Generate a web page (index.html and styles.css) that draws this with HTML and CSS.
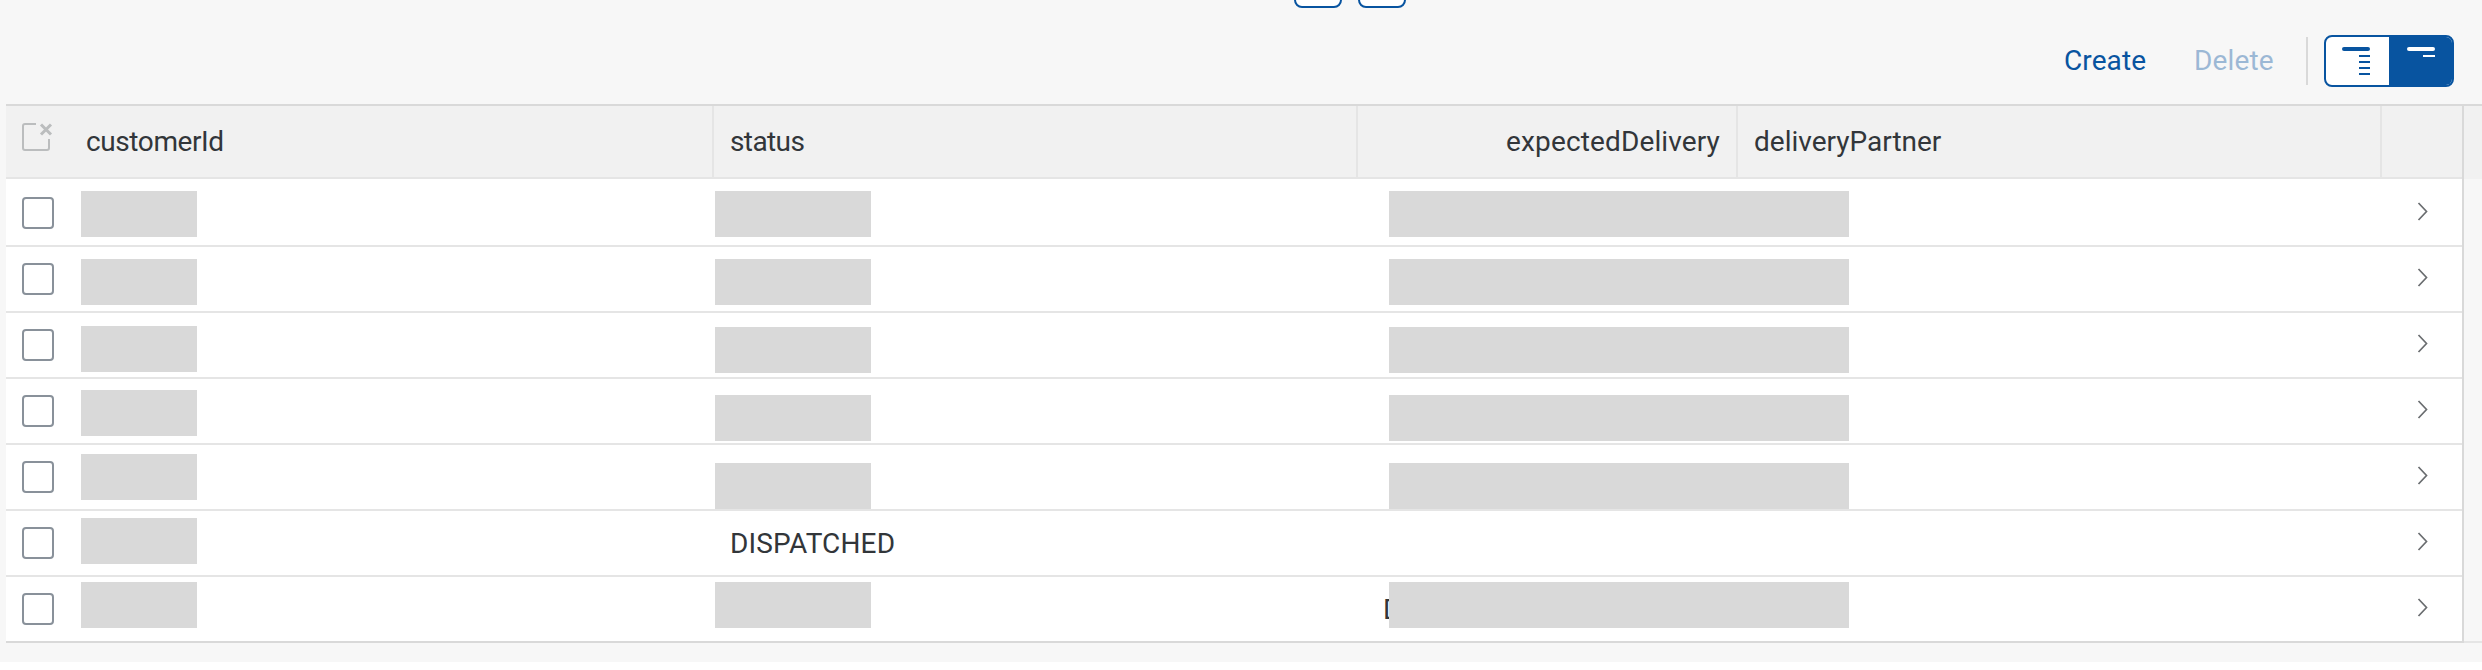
FILE: index.html
```html
<!DOCTYPE html>
<html lang="en">
<head>
<meta charset="utf-8">
<title>Orders</title>
<link rel="stylesheet" href="styles.css">
</head>
<body>
<main class="page">
  <div class="pager"><button class="pager-btn" aria-label="Previous"></button><button class="pager-btn" aria-label="Next"></button></div>
  <div class="toolbar">
    <span class="action create">Create</span>
    <span class="action delete">Delete</span>
    <span class="separator"></span>
    <div class="segmented">
      <span class="segment"><svg width="64" height="48" viewBox="0 0 64 48"><path d="M18 12H42" stroke-width="4" stroke-linecap="round"/><path d="M33 19H44M33 25H44M33 31H44M33 37H44" stroke-width="2"/></svg></span>
      <span class="segment active"><svg width="64" height="48" viewBox="0 0 64 48"><path d="M20 12H44" stroke-width="4" stroke-linecap="round"/><path d="M34 19H46" stroke-width="2"/></svg></span>
    </div>
  </div>
  <div class="table-area">
    <div class="table">
      <div class="row head">
        <div class="select"><svg width="32" height="30" viewBox="0 0 32 30" class="clear"><path d="M14 2H3Q1 2 1 4V26Q1 28 3 28H25Q27 28 27 26V17" stroke-width="2"/><path d="M19 2.5L29 12.5M29 2.5L19 12.5" stroke-width="3"/></svg></div>
        <div class="cell"><span class="t-customer">customerId</span></div>
        <div class="cell"><span class="t-status">status</span></div>
        <div class="cell right"><span class="t-expected">expectedDelivery</span></div>
        <div class="cell"><span class="t-partner">deliveryPartner</span></div>
        <div class="nav"></div>
      </div>
      <div class="row first">
        <div class="select"><span class="checkbox"></span></div>
        <div class="cell"><span class="mask m-id y12"></span></div><div class="cell"><span class="mask m-status y12"></span></div><div class="cell"><span class="mask m-wide y12"></span></div><div class="cell"></div>
        <div class="nav"><svg class="chevron" width="12" height="20" viewBox="0 0 12 20"><path d="M1.5 1L9.5 9.5L1.5 18"/></svg></div>
      </div>
      <div class="row">
        <div class="select"><span class="checkbox"></span></div>
        <div class="cell"><span class="mask m-id y12"></span></div><div class="cell"><span class="mask m-status y12"></span></div><div class="cell"><span class="mask m-wide y12"></span></div><div class="cell"></div>
        <div class="nav"><svg class="chevron" width="12" height="20" viewBox="0 0 12 20"><path d="M1.5 1L9.5 9.5L1.5 18"/></svg></div>
      </div>
      <div class="row">
        <div class="select"><span class="checkbox"></span></div>
        <div class="cell"><span class="mask m-id y13"></span></div><div class="cell"><span class="mask m-status y14"></span></div><div class="cell"><span class="mask m-wide y14"></span></div><div class="cell"></div>
        <div class="nav"><svg class="chevron" width="12" height="20" viewBox="0 0 12 20"><path d="M1.5 1L9.5 9.5L1.5 18"/></svg></div>
      </div>
      <div class="row">
        <div class="select"><span class="checkbox"></span></div>
        <div class="cell"><span class="mask m-id y11"></span></div><div class="cell"><span class="mask m-status y16"></span></div><div class="cell"><span class="mask m-wide y16"></span></div><div class="cell"></div>
        <div class="nav"><svg class="chevron" width="12" height="20" viewBox="0 0 12 20"><path d="M1.5 1L9.5 9.5L1.5 18"/></svg></div>
      </div>
      <div class="row">
        <div class="select"><span class="checkbox"></span></div>
        <div class="cell"><span class="mask m-id y9"></span></div><div class="cell"><span class="mask m-status y18"></span></div><div class="cell"><span class="mask m-wide y18"></span></div><div class="cell"></div>
        <div class="nav"><svg class="chevron" width="12" height="20" viewBox="0 0 12 20"><path d="M1.5 1L9.5 9.5L1.5 18"/></svg></div>
      </div>
      <div class="row">
        <div class="select"><span class="checkbox"></span></div>
        <div class="cell"><span class="mask m-id y7"></span></div><div class="cell value"><span class="t-value">DISPATCHED</span></div><div class="cell"></div><div class="cell"></div>
        <div class="nav"><svg class="chevron" width="12" height="20" viewBox="0 0 12 20"><path d="M1.5 1L9.5 9.5L1.5 18"/></svg></div>
      </div>
      <div class="row last">
        <div class="select"><span class="checkbox"></span></div>
        <div class="cell"><span class="mask m-id y5"></span></div><div class="cell"><span class="mask m-status y5"></span></div><div class="cell"><span class="peek">D</span><span class="mask m-wide y5"></span></div><div class="cell"></div>
        <div class="nav"><svg class="chevron" width="12" height="20" viewBox="0 0 12 20"><path d="M1.5 1L9.5 9.5L1.5 18"/></svg></div>
      </div>
    </div>
    <div class="gutter"><div class="gutter-head"></div></div>
  </div>
</main>
</body>
</html>
```
FILE: styles.css
```css
* { box-sizing: border-box; }
body { margin: 0; background: #fff; color: #32363a; font: 28px/36px Roboto, "Noto Sans", sans-serif; }
svg { display: block; fill: none; }
.page { height: 662px; background: #f7f7f7; overflow: hidden; display: flex; flex-direction: column; }
.pager { height: 8px; flex: none; display: flex; align-items: flex-end; gap: 16px; padding-left: 1294px; }
.pager-btn { width: 48px; height: 52px; flex: none; padding: 0; background: #fff; border: 2px solid #0854a0; border-radius: 8px; }
.toolbar { height: 96px; flex: none; display: flex; align-items: flex-start; justify-content: flex-end; padding: 27px 28px 0 0; }
.action { line-height: 52px; white-space: nowrap; color: #0854a0; }
.create { width: 130px; letter-spacing: 0.1px; }
.delete { width: 112px; letter-spacing: 0.15px; opacity: .38; }
.separator { width: 2px; height: 48px; margin: 2px 16px 0 0; background: #d9d9d9; }
.segmented { display: flex; width: 130px; height: 52px; border: 2px solid #0854a0; border-radius: 8px; background: #fff; overflow: hidden; }
.segment { width: 63px; height: 48px; flex: none; color: #0854a0; }
.segment svg { stroke: currentColor; }
.segment.active { background: #0854a0; color: #fff; }
.table-area { display: flex; height: 539px; padding-left: 6px; flex: none; }
.table { width: 2458px; flex: none; border-top: 2px solid #d9d9d9; border-right: 2px solid #d9d9d9; }
.gutter { flex: 1; border-top: 2px solid #d9d9d9; border-bottom: 2px solid #e5e5e5; }
.gutter-head { height: 73px; background: #f1f1f1; }
.row { display: grid; grid-template-columns: 74px 634px 644px 380px 644px 80px; height: 66px; background: #fff; border-bottom: 2px solid #e5e5e5; }
.row.head { height: 73px; background: #f1f1f1; }
.row.first { height: 68px; }
.row.last { border-color: #d9d9d9; }
.cell { display: flex; min-width: 0; white-space: nowrap; }
.head .cell { align-items: center; padding-left: 16px; border-right: 2px solid #e5e5e5; }
.head .cell:nth-child(2) { padding-left: 6px; }
.head .cell.right { justify-content: flex-end; padding: 0 16px 0 0; }
.t-customer { letter-spacing: -0.4px; }
.t-status { letter-spacing: -0.6px; }
.t-expected { letter-spacing: 0.13px; }
.t-value { letter-spacing: 0.15px; }
.select { padding: 16px 0 0 16px; }
.first .select { padding-top: 18px; }
.clear { stroke: #bbbdbe; }
.checkbox { display: block; width: 32px; height: 32px; border: 2px solid #89919a; border-radius: 4px; }
.mask { flex: none; height: 46px; background: #d9d9d9; position: relative; }
.m-id { width: 116px; margin-left: 1px; }
.m-status { width: 156px; margin-left: 1px; }
.m-wide { width: 460px; margin-left: 31px; }
.y5 { margin-top: 5px; }
.y7 { margin-top: 7px; }
.y9 { margin-top: 9px; }
.y11 { margin-top: 11px; }
.y12 { margin-top: 12px; }
.y13 { margin-top: 13px; }
.y14 { margin-top: 14px; }
.y16 { margin-top: 16px; }
.y18 { margin-top: 18px; }
.value { padding: 15px 0 0 16px; }
.peek { width: 19px; margin: 15px -19px 0 25px; flex: none; }
.peek + .mask { margin-left: 6px; }
.chevron { margin: 21px 0 0 35px; stroke: #6a6d70; stroke-width: 1.7; }
.first .chevron { margin-top: 23px; }
```
